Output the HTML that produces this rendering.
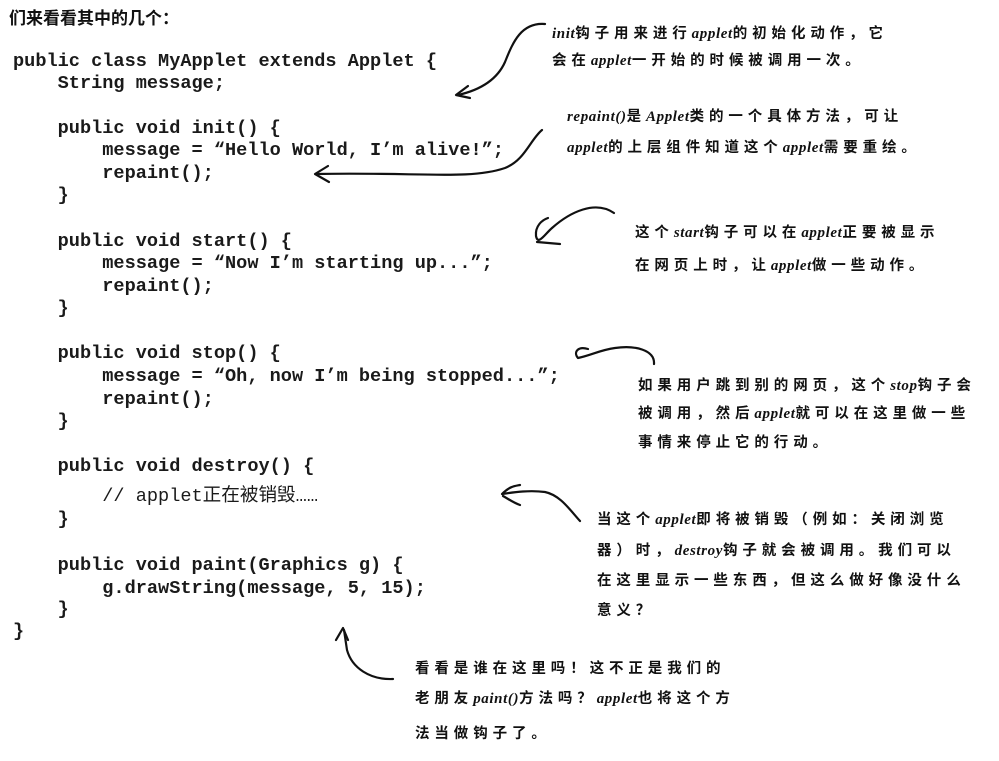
<!DOCTYPE html>
<html><head><meta charset="utf-8"><style>
html,body{margin:0;padding:0;background:#fff;}
body{width:999px;height:761px;position:relative;overflow:hidden;color:#111;}
.c{position:absolute;left:13px;font-family:"Liberation Mono","Noto Sans CJK SC",monospace;font-size:18.6px;font-weight:bold;white-space:pre;line-height:22px;color:#1a1a1a;}
.a{position:absolute;font-family:"Noto Sans CJK SC","WenQuanYi Zen Hei",sans-serif;font-size:14.5px;font-weight:bold;letter-spacing:4.9px;white-space:nowrap;line-height:20px;color:#111;}
.a i{font-family:"Liberation Serif",serif;font-style:italic;letter-spacing:0.6px;font-size:15px;}
.h{position:absolute;left:9px;top:4px;font-family:"Liberation Sans","Noto Sans CJK SC",sans-serif;font-size:17px;font-weight:bold;}
svg{position:absolute;left:0;top:0;}
</style></head><body>
<div class="h">们来看看其中的几个：</div>
<div class="c" style="top:51px">public class MyApplet extends Applet {</div>
<div class="c" style="top:73px">    String message;</div>
<div class="c" style="top:118px">    public void init() {</div>
<div class="c" style="top:140px">        message = “Hello World, I’m alive!”;</div>
<div class="c" style="top:163px">        repaint();</div>
<div class="c" style="top:185px">    }</div>
<div class="c" style="top:231px">    public void start() {</div>
<div class="c" style="top:253px">        message = “Now I’m starting up...”;</div>
<div class="c" style="top:276px">        repaint();</div>
<div class="c" style="top:298px">    }</div>
<div class="c" style="top:343px">    public void stop() {</div>
<div class="c" style="top:366px">        message = “Oh, now I’m being stopped...”;</div>
<div class="c" style="top:389px">        repaint();</div>
<div class="c" style="top:411px">    }</div>
<div class="c" style="top:456px">    public void destroy() {</div>
<div class="c" style="top:486px;font-weight:normal">        // applet正在被销毁……</div>
<div class="c" style="top:509px">    }</div>
<div class="c" style="top:555px">    public void paint(Graphics g) {</div>
<div class="c" style="top:578px">        g.drawString(message, 5, 15);</div>
<div class="c" style="top:599px">    }</div>
<div class="c" style="top:621px">}</div>

<div class="a" style="left:552px;top:23px"><i>init</i>钩子用来进行<i>applet</i>的初始化动作，它</div>
<div class="a" style="left:552px;top:50px">会在<i>applet</i>一开始的时候被调用一次。</div>
<div class="a" style="left:567px;top:106px"><i>repaint()</i>是<i>Applet</i>类的一个具体方法，可让</div>
<div class="a" style="left:567px;top:137px"><i>applet</i>的上层组件知道这个<i>applet</i>需要重绘。</div>
<div class="a" style="left:635px;top:222px">这个<i>start</i>钩子可以在<i>applet</i>正要被显示</div>
<div class="a" style="left:635px;top:255px">在网页上时，让<i>applet</i>做一些动作。</div>
<div class="a" style="left:638px;top:375px">如果用户跳到别的网页，这个<i>stop</i>钩子会</div>
<div class="a" style="left:638px;top:403px">被调用，然后<i>applet</i>就可以在这里做一些</div>
<div class="a" style="left:638px;top:432px">事情来停止它的行动。</div>
<div class="a" style="left:597px;top:509px">当这个<i>applet</i>即将被销毁（例如：关闭浏览</div>
<div class="a" style="left:597px;top:540px">器）时，<i>destroy</i>钩子就会被调用。我们可以</div>
<div class="a" style="left:597px;top:570px">在这里显示一些东西，但这么做好像没什么</div>
<div class="a" style="left:597px;top:600px">意义？</div>
<div class="a" style="left:415px;top:658px">看看是谁在这里吗！这不正是我们的</div>
<div class="a" style="left:415px;top:688px">老朋友<i>paint()</i>方法吗？<i>applet</i>也将这个方</div>
<div class="a" style="left:415px;top:723px">法当做钩子了。</div>

<svg width="999" height="761" fill="none" stroke="#111" stroke-width="2.2" stroke-linecap="round" stroke-linejoin="round">
<path d="M545 24 C520 22 512 45 505 62 C497 80 480 90 458 95"/>
<path d="M468 86 L456 95 L470 98"/>
<path d="M542 130 C530 140 525 160 505 168 C470 180 420 172 316 174"/>
<path d="M328 166 L315 174 L329 182"/>
<path d="M614 213 C595 200 570 212 552 228 C545 234 538 246 536 236 C535 226 542 220 548 218"/>
<path d="M537 242 L560 244"/>
<path d="M654 364 C655 350 635 345 615 348 C600 350 592 355 578 358 C573 352 578 346 588 349"/>
<path d="M580 521 C570 510 560 495 545 492 C530 490 515 492 502 494 C510 486 515 486 520 485 M503 496 C510 500 514 503 520 505"/>
<path d="M393 679 C370 680 352 668 347 650 L344 630"/>
<path d="M336 640 L343 628 L348 640"/>
</svg>
</body></html>
